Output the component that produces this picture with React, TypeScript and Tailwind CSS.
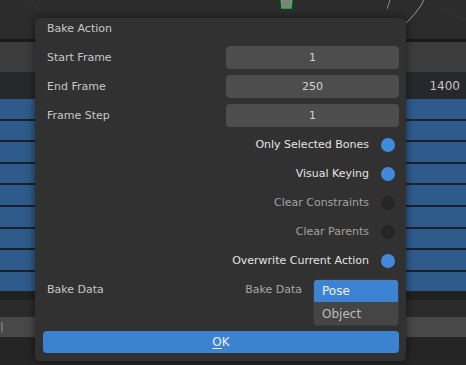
import React from "react";

const font = { fontFamily: '"DejaVu Sans", "Liberation Sans", sans-serif' };

const NumberField = ({ label, value }: { label: string; value: string }) => (
  <div className="flex flex-row items-center h-[23px]">
    <div className="w-[183px] pl-[4px] pt-[1px] text-[#c8c8c8]">{label}</div>
    <div className="w-[173px] h-[23px] pt-[1px] rounded-[4px] bg-[#4d4d4d] flex items-center justify-center text-[#d4d4d4]">
      {value}
    </div>
  </div>
);

const Toggle = ({ label, on }: { label: string; on: boolean }) => (
  <div className="flex flex-row items-center justify-end h-[23px] pr-[4px]">
    <span className={"pt-[1px] " + (on ? "text-[#e4e4e4]" : "text-[#a3a3a3]")}>{label}</span>
    <span
      className={
        "ml-[12px] w-[14px] h-[14px] rounded-full " +
        (on ? "bg-[#4189dd]" : "bg-[#262626]")
      }
    />
  </div>
);

const rows = [0, 1, 2, 3, 4, 5, 6, 7, 8];

export default function App() {
  return (
    <div className="relative w-[466px] h-[365px] overflow-hidden bg-[#252525] text-[11px]" style={font}>
      {/* editor behind the popup */}
      <div className="flex flex-col">
        <div className="h-[39px] bg-[#2c2c2c] relative">
          <svg width="466" height="39" className="absolute inset-0">
            <line x1="390" y1="0" x2="387" y2="9" stroke="#8a8a8a" strokeWidth="1" />
            <path d="M424 0 Q418 12 405 24" stroke="#9a9a9a" strokeWidth="1" fill="none" />
            <line x1="28" y1="0" x2="40" y2="10" stroke="#3a3a3a" strokeWidth="1" />
            <line x1="440" y1="8" x2="466" y2="20" stroke="#363636" strokeWidth="1" />
            <path d="M281 -2 L292 -2 L291 8 L282 8 Z" fill="#808080" stroke="#2fbf48" strokeWidth="1.5" />
          </svg>
        </div>
        <div className="h-[3px] bg-[#1a1a1a]" />
        <div className="h-[30px] bg-[#3d3d3d]" />
        <div className="h-[27px] bg-[#26282b] flex items-center justify-end pr-[6px] text-[12px] text-[#c4c4c4]">
          1400
        </div>
        <div className="flex flex-col gap-[2px] bg-[#1c2028]">
          {rows.map((r) => (
            <div key={r} className="h-[19.6px] bg-[#2e5b8b]" />
          ))}
        </div>
        <div className="h-[9px] bg-[#212121]" />
        <div className="h-[17px] bg-[#2b2b2b]" />
        <div className="h-[20px] bg-[#484848] text-[#9a9a9a] leading-[20px]">|</div>
        <div className="h-[27px] bg-[#252525]" />
      </div>

      {/* Bake Action popup */}
      <div className="absolute left-[35px] top-[18px] w-[371px] h-[343px] rounded-[5px] bg-[#313131] shadow-[0_0_9px_rgba(0,0,0,0.55)] flex flex-col pl-[8px] pr-[7px] pt-[1px]">
        <div className="h-[20px] flex items-center pl-[4px] pt-[1px] text-[#c8c8c8]">Bake Action</div>
        <div className="flex flex-col gap-[6px] mt-[7px]">
          <NumberField label="Start Frame" value="1" />
          <NumberField label="End Frame" value="250" />
          <NumberField label="Frame Step" value="1" />
          <Toggle label="Only Selected Bones" on />
          <Toggle label="Visual Keying" on />
          <Toggle label="Clear Constraints" on={false} />
          <Toggle label="Clear Parents" on={false} />
          <Toggle label="Overwrite Current Action" on />
          <div className="flex flex-row items-center h-[23px] relative">
            <div className="w-[183px] pl-[4px] pt-[2px] text-[#c8c8c8]">Bake Data</div>
            <div className="w-[76px] text-right pt-[2px] text-[#a8a8a8]">Bake Data</div>
            <div className="absolute left-[270px] top-[1px] w-[86px] rounded-[4px] bg-[#454545] border border-[#3a3a3a] flex flex-col overflow-hidden">
              <div className="h-[22px] bg-[#3d83d4] text-[#f2f2f2] flex items-center pl-[8px] text-[12px]">Pose</div>
              <div className="h-[23px] text-[#bdbdbd] flex items-center pl-[8px] text-[12px]">Object</div>
            </div>
          </div>
        </div>
        <div className="flex-1" />
        <div className="h-[22px] mb-[8px] rounded-[4px] bg-[#3b82d0] flex items-center justify-center text-[#f0f0f0] text-[12px]">
          <span className="underline underline-offset-[2px] decoration-1">O</span>K
        </div>
      </div>
    </div>
  );
}
